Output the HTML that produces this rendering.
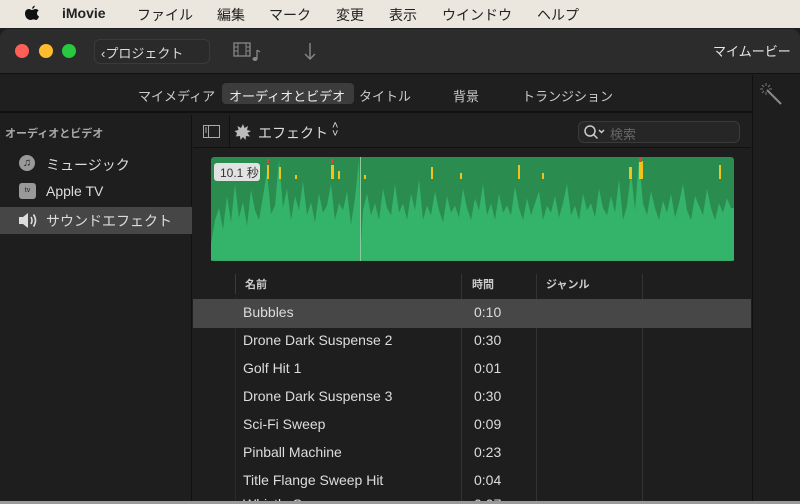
<!DOCTYPE html>
<html><head><meta charset="utf-8"><style>
*{margin:0;padding:0;box-sizing:border-box}
body{width:800px;height:504px;overflow:hidden;background:#1e1e1e;font-family:"Liberation Sans","Noto Sans CJK JP",sans-serif;color:#ddd;position:relative}
.abs{position:absolute}
#menu{left:0;top:0;width:800px;height:28px;background:#ebe6de;color:#222;font-size:14px}
#menu span{position:absolute;top:5px}
#win{left:0;top:29px;width:800px;height:475px;background:#1e1e1e;border-radius:9px 9px 0 0;overflow:hidden}
#tb{left:0;top:0;width:800px;height:45px;background:#2c2c2c;border-bottom:1px solid #111}
.dot{width:14px;height:14px;border-radius:50%;top:15px}
#tabs{left:0;top:46px;width:752px;height:38px;background:#1f1f1f;border-bottom:2px solid #111;font-size:13px;color:#ccc}
#tabs span{position:absolute;top:11px}
#side{left:0;top:86px;width:192px;height:400px;background:#1e1e1e;border-right:1px solid #111}
#right{left:752px;top:46px;width:48px;height:440px;background:#1e1e1e;border-left:1px solid #111}
.row{position:absolute;left:193px;width:558px;height:28px;font-size:14px;color:#ddd}
.row span{position:absolute;top:5px}
</style></head><body>
<div id="menu" class="abs">
<svg class="abs" style="left:24px;top:5px" width="16" height="18" viewBox="0 0 16 18"><path d="M8 5c1-.1 2.3-1 3.6-1 1.2 0 2.3.6 3 1.6-2.4 1.4-2 4.8.4 5.8-.5 1.5-1.6 3.6-2.9 3.6-1 0-1.4-.6-2.6-.6s-1.7.6-2.6.6C3.4 15 1 12 1 8.5 1 5.6 3 4 4.8 4 6.1 4 7 5 8 5zM8.2 3.8C8 2.4 9.2.8 10.7.6c.2 1.5-1.2 3.1-2.5 3.2z" fill="#111"/></svg>
<span style="left:62px;font-weight:bold">iMovie</span>
<span style="left:137px">ファイル</span><span style="left:217px">編集</span><span style="left:269px">マーク</span><span style="left:336px">変更</span><span style="left:389px">表示</span><span style="left:442px">ウインドウ</span><span style="left:537px">ヘルプ</span>
</div>
<div id="win" class="abs">
<div id="tb" class="abs">
<div class="abs dot" style="left:15px;background:#fe5f57"></div>
<div class="abs dot" style="left:39px;background:#febc2e"></div>
<div class="abs dot" style="left:62px;background:#28c840"></div>
<div class="abs" style="left:94px;top:10px;width:116px;height:25px;border:1px solid #3a3a3a;border-radius:6px;background:#2a2a2a;font-size:13px;color:#ddd;padding:3px 0 0 6px">&#x2039;プロジェクト</div>
<svg class="abs" style="left:233px;top:13px" width="30" height="20"><rect x="1" y="1" width="16" height="13" fill="none" stroke="#888" stroke-width="1.3"/><path d="M5 1v13M13 1v13M1 5h4M1 9h4M13 5h4M13 9h4" stroke="#888"/><path d="M24 8v9" stroke="#888" stroke-width="1.3"/><ellipse cx="22" cy="17" rx="2.5" ry="2" fill="#888"/><path d="M24 8l3 2" stroke="#888" stroke-width="1.3"/></svg>
<svg class="abs" style="left:303px;top:13px" width="14" height="20"><path d="M7 1v16M2 12l5 5 5-5" fill="none" stroke="#888" stroke-width="1.4"/></svg>
<span class="abs" style="left:713px;top:12px;font-size:13px;color:#e6e6e6">マイムービー</span>
</div>
<div id="tabs" class="abs">
<span style="left:138px">マイメディア</span>
<div class="abs" style="left:222px;top:8px;width:132px;height:21px;background:#3c3c3c;border-radius:4px"></div>
<span style="left:229px;color:#eee">オーディオとビデオ</span>
<span style="left:359px">タイトル</span><span style="left:453px">背景</span><span style="left:522px">トランジション</span>
</div>
<div id="right" class="abs">
<svg class="abs" style="left:6px;top:7px" width="24" height="24"><path d="M8 8l14 14" stroke="#888" stroke-width="2"/><path d="M7 1v3M7 10v3M1 7h3M10 7h3M3 3l2 2M11 3l-2 2M3 11l2-2" stroke="#777"/></svg>
</div>
<div id="side" class="abs">
<span class="abs" style="left:5px;top:10px;font-size:11px;font-weight:bold;color:#aaa">オーディオとビデオ</span>
<div class="abs" style="left:19px;top:40px;width:16px;height:16px;border-radius:50%;background:#999;color:#222;font-size:11px;text-align:center;line-height:16px">&#9835;</div>
<span class="abs" style="left:46px;top:40px;font-size:14px">ミュージック</span>
<div class="abs" style="left:19px;top:68px;width:17px;height:16px;border-radius:3px;background:#999;color:#222;font-size:7px;text-align:center;line-height:16px">tv</div>
<span class="abs" style="left:46px;top:68px;font-size:14px">Apple TV</span>
<div class="abs" style="left:0;top:92px;width:192px;height:27px;background:#464646"></div>
<svg class="abs" style="left:18px;top:97px" width="20" height="17"><path d="M1 5h4l5-4v15l-5-4H1z" fill="#ddd"/><path d="M13 5q2 3.5 0 7M15.5 2.5q4 6 0 12" fill="none" stroke="#ddd" stroke-width="1.6"/></svg>
<span class="abs" style="left:46px;top:96px;font-size:14px">サウンドエフェクト</span>
</div>
<div class="abs" style="left:193px;top:86px;width:558px;height:33px;background:#1f1f1f;border-bottom:1px solid #111"></div>
<div class="abs" style="left:229px;top:86px;width:1px;height:33px;background:#111"></div>
<svg class="abs" style="left:203px;top:96px" width="18" height="14"><rect x="0.5" y="0.5" width="16" height="12" fill="none" stroke="#aaa"/><path d="M5.5 1v12" stroke="#aaa"/><path d="M2 3h2M2 5h2M2 7h2" stroke="#aaa"/></svg>
<svg class="abs" style="left:234px;top:94px" width="18" height="18"><path d="M9 1l1.5 4 3.5-2-1 4 4 1-3.5 2 2.5 3.5-4-.5-.5 4-2.5-3-2.5 3-.5-4-4 .5L3 10 .5 8l4-1-1-4 3.5 2z" fill="#bbb"/></svg>
<span class="abs" style="left:258px;top:94px;font-size:14px;color:#ddd">エフェクト</span>
<span class="abs" style="left:332px;top:93px;font-size:11px;color:#ddd;line-height:8px">&#x2c4;<br>&#x2c5;</span>
<div class="abs" style="left:578px;top:92px;width:162px;height:22px;border:1px solid #3a3a3a;border-radius:6px;background:#262626"></div>
<svg class="abs" style="left:583px;top:95px" width="24" height="16"><circle cx="7" cy="7" r="5" fill="none" stroke="#ccc" stroke-width="1.5"/><path d="M10.5 10.5l4 4M16 6l2.5 2.5L21 6" stroke="#ccc" stroke-width="1.5" fill="none"/></svg>
<span class="abs" style="left:610px;top:95px;font-size:13px;color:#666">検索</span>
<svg class="abs" style="left:211px;top:128px" width="523" height="104" viewBox="0 0 523 104">
<rect width="523" height="104" rx="3" fill="#2b8c50"/>
<polygon transform="matrix(1,0,0,1.2,0,-21)" fill="#34b36a" points="0,104 0,90 4,70 8,60 12,78 16,50 20,72 24,40 28,68 32,55 36,75 40,45 44,62 48,70 52,50 56,30 60,65 64,58 68,20 72,60 76,44 80,70 84,50 88,62 92,38 96,66 100,55 104,72 108,48 112,64 116,58 120,40 124,70 128,56 132,62 136,46 140,74 144,52 148,20 150,90 152,62 156,48 160,66 164,56 168,70 172,44 176,60 180,66 184,40 188,64 192,56 196,70 200,48 204,62 208,36 212,70 216,58 220,66 224,46 228,62 232,72 236,50 240,64 244,58 248,68 252,44 256,60 260,70 264,52 268,62 272,40 276,66 280,56 284,70 288,48 292,64 296,58 300,66 304,42 308,60 312,70 316,52 320,66 324,56 328,46 332,70 336,58 340,64 344,50 348,68 352,56 356,40 360,66 364,58 368,70 372,48 376,62 380,56 384,68 388,44 392,60 396,66 400,50 404,64 408,36 412,70 416,58 420,30 424,62 428,20 432,56 436,66 440,46 444,60 448,70 452,54 456,64 460,48 464,68 468,56 472,40 476,62 480,70 484,50 488,58 492,66 496,44 500,60 504,70 508,56 512,64 516,52 520,60 523,60 523,104"/>
<rect x="149" y="0" width="1" height="104" fill="#8fc9a0"/>
<g fill="#f2c21a"><rect x="56" y="8" width="2" height="14"/><rect x="68" y="10" width="2" height="12"/><rect x="84" y="18" width="2" height="4"/><rect x="120" y="8" width="3" height="14"/><rect x="127" y="14" width="2" height="8"/><rect x="220" y="10" width="2" height="12"/><rect x="249" y="16" width="2" height="6"/><rect x="307" y="8" width="2" height="14"/><rect x="331" y="16" width="2" height="6"/><rect x="428" y="4" width="4" height="18"/><rect x="418" y="10" width="3" height="12"/><rect x="508" y="8" width="2" height="14"/><rect x="153" y="18" width="2" height="4"/></g>
<g fill="#e5423a"><rect x="56" y="2" width="2" height="4"/><rect x="120" y="2" width="2" height="4"/><rect x="428" y="1" width="3" height="4"/></g>
<rect x="3" y="6" width="46" height="18" rx="3" fill="#e2e2e2"/>
<text x="9" y="20" font-size="12" fill="#333" font-family="Liberation Sans, Noto Sans CJK JP, sans-serif">10.1 秒</text>
</svg>
<div class="abs" style="left:235px;top:245px;width:1px;height:20px;background:#3a3a3a"></div>
<div class="abs" style="left:461px;top:245px;width:1px;height:230px;background:#333"></div>
<div class="abs" style="left:536px;top:245px;width:1px;height:230px;background:#333"></div>
<div class="abs" style="left:642px;top:245px;width:1px;height:230px;background:#333"></div>
<div class="abs" style="left:235px;top:268px;width:1px;height:210px;background:#2a2a2a"></div>
<span class="abs" style="left:245px;top:247px;font-size:11px;font-weight:bold;color:#ccc">名前</span>
<span class="abs" style="left:472px;top:247px;font-size:11px;font-weight:bold;color:#ccc">時間</span>
<span class="abs" style="left:546px;top:247px;font-size:11px;font-weight:bold;color:#ccc">ジャンル</span>
<div class="abs" style="left:193px;top:270px;width:558px;height:29px;background:#474747"></div>
<div class="row" style="top:270px"><span style="left:50px">Bubbles</span><span style="left:281px">0:10</span></div>
<div class="row" style="top:298px"><span style="left:50px">Drone Dark Suspense 2</span><span style="left:281px">0:30</span></div>
<div class="row" style="top:326px"><span style="left:50px">Golf Hit 1</span><span style="left:281px">0:01</span></div>
<div class="row" style="top:354px"><span style="left:50px">Drone Dark Suspense 3</span><span style="left:281px">0:30</span></div>
<div class="row" style="top:382px"><span style="left:50px">Sci-Fi Sweep</span><span style="left:281px">0:09</span></div>
<div class="row" style="top:410px"><span style="left:50px">Pinball Machine</span><span style="left:281px">0:23</span></div>
<div class="row" style="top:438px"><span style="left:50px">Title Flange Sweep Hit</span><span style="left:281px">0:04</span></div>
<div class="row" style="top:462px"><span style="left:50px">Whistle Sweep</span><span style="left:281px">0:07</span></div>
</div>
<div class="abs" style="left:0;top:501px;width:800px;height:3px;background:#9a9a9a"></div>
</body></html>
